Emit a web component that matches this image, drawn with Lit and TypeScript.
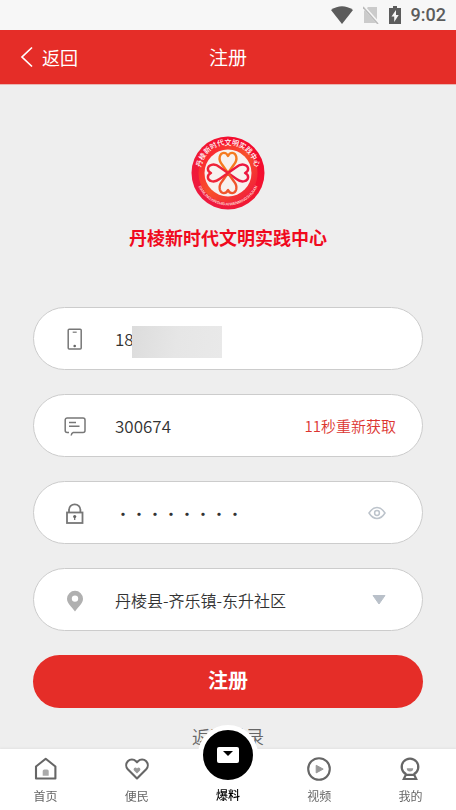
import { LitElement, html, svg, css } from "lit";
import { customElement, property, state } from "lit/decorators.js";
import { classMap } from "lit/directives/class-map.js";

const icons = {
  phone: svg`<rect x="5.200" y="2.300" width="13" height="19.600" rx="1" fill="none" stroke="#777" stroke-width="1.500"/>
    <path d="M9.700 5.200h4" stroke="#777" stroke-width="1.200"/><circle cx="11.700" cy="19" r="1.300" fill="#666"/>`,
  message: svg`<path d="M10 18.500H20a2 2 0 0 0 2-2V6a2 2 0 0 0-2-2H4.200a2 2 0 0 0-2 2V16.500a2 2 0 0 0 2 2H6M10.200 18.500q-1.700.5-2 3" fill="none" stroke="#777" stroke-width="1.500"/>
    <path d="M6 8.500h7M6 12.200h10.500" stroke="#777" stroke-width="1.500"/>`,
  lock: svg`<rect x="4" y="11.500" width="15.500" height="10.500" fill="none" stroke="#777" stroke-width="1.800"/>
    <path d="M6 11.500V9a5.700 5.700 0 0 1 11.400 0V11.500" fill="none" stroke="#777" stroke-width="1.800"/>
    <circle cx="11.700" cy="15.500" r="1.600" fill="#666"/><path d="M11.700 15v4" stroke="#666" stroke-width="1.200"/>`,
  pin: svg`<path fill-rule="evenodd" d="M12 2.800a8 8 0 0 0-8 8c0 4.500 4.500 8 8 12.700 3.500-4.700 8-8.200 8-12.700a8 8 0 0 0-8-8Zm0 4.600a3.200 3.200 0 1 1 0 6.400 3.200 3.200 0 0 1 0-6.400Z" fill="#b0b0b0"/>`,
  home: svg`<path d="M2 9.500 11.700 1.800l9.700 7.700v12H2Z" fill="none" stroke="#666" stroke-width="2.100" stroke-linejoin="round"/>
    <path d="M8.700 18.800v-4.800q0-1.600 1.600-1.600h2.800q1.600 0 1.600 1.600v4.800Z" fill="#aaa"/>`,
  heart: svg`<path d="M12 21.500 2.800 12.300a5.900 5.900 0 0 1 0-8 5.700 5.700 0 0 1 8.200 0l1 1 1-1a5.700 5.700 0 0 1 8.200 0 5.900 5.900 0 0 1 0 8Z" fill="none" stroke="#666" stroke-width="2.100" stroke-linejoin="round"/>
    <path d="m12 16.500-3-3q-1-1.400.2-2.500 1.600-1 2.800.6 1.200-1.600 2.800-.6 1.200 1.100.2 2.500Z" fill="#999"/>`,
  play: svg`<circle cx="12" cy="12" r="10.800" fill="none" stroke="#666" stroke-width="2.100"/>
    <path d="M9.200 8.300v7.600l7-3.800Z" fill="#999" stroke="#999" stroke-linejoin="round"/>`,
  user: svg`<path d="M8.300 17.300a8.300 8.300 0 1 1 7.400 0M7.800 17.800h8.400l2 4.200H5.800Z" fill="none" stroke="#666" stroke-width="2.200"/>
    <path d="M8.800 11.300h6.400a3.200 3.200 0 0 1-6.400 0Z" fill="#999"/>`,
};
type IconName = keyof typeof icons;

@customElement("line-icon")
class LineIcon extends LitElement {
  static styles = css`
    :host { display: block; width: 24px; height: 24px; flex: none; }
    svg { display: block; width: 100%; height: 100%; overflow: visible; }
  `;
  @property() name: IconName = "home";
  render() {
    return html`<svg viewBox="0 0 24 24" aria-hidden="true">${icons[this.name]}</svg>`;
  }
}

@customElement("status-bar")
class StatusBar extends LitElement {
  static styles = css`
    :host {
      display: flex; align-items: center; justify-content: flex-end; gap: 10px;
      height: 30px; padding: 0 10px; background: #f7f7f7; color: #5c5c5c;
      font: 500 18px/30px Roboto, sans-serif;
    }
    svg { display: block; }
  `;
  render() {
    return html`
      <svg width="22" height="18" viewBox="0 0 22 18"><path d="M0 4Q11-3.500 22 4L11 18Z" fill="#5c5c5c"/></svg>
      <svg width="16" height="18" viewBox="0 0 16 18"><path d="M5 1h9v16H1V5Z" fill="#cbcbcb"/><path d="M0 0 16 18" stroke="#f7f7f7" stroke-width="3"/><path d="M0 1 15 18" stroke="#bbb" stroke-width="1.500"/></svg>
      <svg width="12" height="20" viewBox="0 0 12 20"><path d="M0 3h4V1h4v2h4v16H0Z" fill="#5c5c5c"/><path d="M7 5 2.500 11.500h2.700V17l4.500-7H7Z" fill="#f7f7f7"/></svg>
      <time>9:02</time>
    `;
  }
}

@customElement("brand-logo")
class BrandLogo extends LitElement {
  static styles = css`
    :host { display: block; width: 74px; height: 74px; }
    svg { display: block; width: 100%; height: 100%; }
    .name { font: 500 7px "Noto Sans CJK SC", sans-serif; fill: #fff; }
    .latin { font: 700 4px "Liberation Sans", sans-serif; fill: #ffd0c8; }
  `;
  render() {
    const leaf = "M37 37L31 28.500C28.500 25.500 28.200 23 28.800 20.500C30 16 35 15.500 37 20C39 15.500 44 16 45.200 20.500C45.800 23 45.500 25.500 43 28.500Z";
    return html`<svg viewBox="0 0 74 74" role="img" aria-label="丹棱新时代文明实践中心">
      <defs>
        <linearGradient id="ring" x1="1" y1="0" x2="0" y2="1">
          <stop offset="0" stop-color="#f5052f"/><stop offset=".5" stop-color="#f21830"/><stop offset="1" stop-color="#ec1b46"/>
        </linearGradient>
        <linearGradient id="band" x1="0" y1="0" x2="1" y2="1">
          <stop offset="0" stop-color="#fb1b35"/><stop offset=".5" stop-color="#f8512a"/><stop offset="1" stop-color="#f01a3c"/>
        </linearGradient>
        <path id="top" d="M11 45A27.500 27.500 0 1 1 63 45"/>
        <path id="bottom" d="M4.500 37A32.500 32.500 0 0 0 69.500 37"/>
      </defs>
      <circle cx="37" cy="37" r="36.500" fill="url(#ring)"/>
      <circle cx="37" cy="37" r="26" fill="none" stroke="url(#band)" stroke-width="7"/>
      <circle cx="37" cy="37" r="23.500" fill="#f7f1ef"/>
      <g fill="none" stroke-width="2.400" stroke-linejoin="round">
        <path d=${leaf} stroke="#f57a20"/>
        <path d=${leaf} stroke="#ec1740" transform="rotate(90 37 37)"/>
        <path d=${leaf} stroke="#f0552c" transform="rotate(180 37 37)"/>
        <path d=${leaf} stroke="#ef2338" transform="rotate(270 37 37)"/>
      </g>
      <text class="name" text-anchor="middle"><textPath href="#top" startOffset="50%">丹棱新时代文明实践中心</textPath></text>
      <text class="latin" text-anchor="middle"><textPath href="#bottom" startOffset="50%">DANLINGXINSHIDAIWENMINGSHIJIAN</textPath></text>
    </svg>`;
  }
}

@customElement("tab-bar")
class TabBar extends LitElement {
  static styles = css`
    :host { display: block; background: #fff; box-shadow: 0 -1px 2px #e2e2e2; }
    nav { display: grid; grid-template-columns: repeat(5, 1fr); height: 61px; }
    .tab {
      display: flex; flex-direction: column; align-items: center; gap: 7px; padding-top: 8px;
      color: #666; text-decoration: none; font-size: 12px; line-height: 16px;
    }
    .main { position: relative; padding-top: 38px; color: #000; font-weight: 500; }
    .disc {
      position: absolute; bottom: 25px; left: 50%; margin-left: -30px; width: 50px; height: 50px;
      border: 5px solid #fff; border-radius: 50%; background: #000;
      display: grid; place-items: center;
    }
  `;
  @state() tabs: { label: string; icon?: IconName }[] = [
    { label: "首页", icon: "home" },
    { label: "便民", icon: "heart" },
    { label: "爆料" },
    { label: "视频", icon: "play" },
    { label: "我的", icon: "user" },
  ];
  render() {
    return html`<nav>${this.tabs.map(({ label, icon }) => html`
      <a href="#" class=${classMap({ tab: true, main: !icon })}>
        ${icon
          ? html`<line-icon name=${icon}></line-icon>`
          : html`<span class="disc"><svg width="22" height="16" viewBox="0 0 22 16"><rect width="22" height="16" rx="2" fill="#fff"/><path d="M6 4h10l-5 5Z"/></svg></span>`}
        <span>${label}</span>
      </a>`)}</nav>`;
  }
}

@customElement("app-root")
class AppRoot extends LitElement {
  static styles = css`
    :host {
      display: block; min-height: 100vh; background: #eee; color: #333;
      font-family: "Noto Sans CJK SC", sans-serif;
    }
    .header {
      display: grid; grid-template-columns: 1fr auto 1fr; align-items: center;
      height: 54px; padding: 0 20px; border-bottom: 1px solid #e9b5b2;
      background: #e52d28; color: #fff;
    }
    .back { display: flex; align-items: center; gap: 8px; color: #fff; text-decoration: none; font-size: 18px; line-height: 24px; }
    .header h1 { margin: 0; font-size: 19px; line-height: 24px; font-weight: 400; }
    .brand { display: flex; flex-direction: column; align-items: center; gap: 12px; padding-top: 51px; }
    .brand h2 { margin: 0; color: #f00a1e; font-size: 18px; line-height: 30px; font-weight: 700; }
    form { display: flex; flex-direction: column; gap: 24px; padding: 55px 33px 0; }
    .field {
      position: relative; display: flex; align-items: center; box-sizing: border-box; height: 63px;
      padding: 0 26px 0 29px; border: 1px solid #ccc; border-radius: 32px; background: #fff;
    }
    .field label { margin-right: 28px; }
    .field input, .field select {
      flex: 1; min-width: 0; height: 40px; padding: 0; border: 0; outline: 0; background: none;
      color: #333; font: 350 17px/24px "Noto Sans CJK SC", sans-serif; appearance: none;
    }
    .field select, .field .secret { font-size: 16px; }
    .mask {
      position: absolute; left: 98px; top: 18px; width: 90px; height: 32px;
      background: linear-gradient(100deg, #dcdcdc, #e6e6e6 50%, #e9e9e9);
    }
    button { border: 0; padding: 0; background: none; font-family: inherit; }
    .code { color: #dc3530; font-size: 15px; line-height: 24px; font-weight: 350; }
    .eye { margin-right: 10px; }
    .eye svg, .arrow { display: block; }
    .arrow { margin-right: 10px; pointer-events: none; }
    .submit { height: 53px; padding-bottom: 4px; border-radius: 27px; background: #e52d28; color: #fff; font-size: 20px; line-height: 28px; font-weight: 700; }
    .login { display: block; width: max-content; margin: 16px auto 0; padding-bottom: 62px; color: #666; font-size: 18px; line-height: 24px; font-weight: 350; text-decoration: none; }
    .tabs { position: fixed; left: 0; right: 0; bottom: 0; }
  `;
  @state() visible = false;
  render() {
    return html`
      <status-bar></status-bar>
      <header class="header">
        <a class="back" href="#"><svg width="14" height="22" viewBox="0 0 14 22"><path d="M12 1.500 2 11l10 9.500" fill="none" stroke="#fff" stroke-width="1.700"/></svg>返回</a>
        <h1>注册</h1>
      </header>
      <main>
        <section class="brand"><brand-logo></brand-logo><h2>丹棱新时代文明实践中心</h2></section>
        <form>
          <div class="field">
            <label for="phone" aria-label="手机号"><line-icon name="phone"></line-icon></label>
            <input id="phone" type="tel" value="18" autocomplete="off">
            <span class="mask"></span>
          </div>
          <div class="field">
            <label for="code" aria-label="验证码"><line-icon name="message"></line-icon></label>
            <input id="code" value="300674" autocomplete="off">
            <button class="code" type="button">11秒重新获取</button>
          </div>
          <div class="field">
            <label for="password" aria-label="密码"><line-icon name="lock"></line-icon></label>
            <input id="password" class="secret" type=${this.visible ? "text" : "password"} value="12345678" autocomplete="off">
            <button class="eye" type="button" aria-label="显示密码" @click=${() => (this.visible = !this.visible)}>
              <svg width="18" height="14" viewBox="0 0 18 14" fill="none" stroke="#bcc3cb" stroke-width="1.500"><path d="M1 7q3.500-5.500 8-5.500T17 7q-3.500 5.500-8 5.500T1 7Z"/><circle cx="9" cy="7" r="2.400"/></svg>
            </button>
          </div>
          <div class="field">
            <label for="area" aria-label="地区"><line-icon name="pin"></line-icon></label>
            <select id="area"><option>丹棱县-齐乐镇-东升社区</option></select>
            <svg class="arrow" width="14" height="10" viewBox="0 0 14 10"><path d="M1 .5h12L7 9Z" fill="#b9c0c9" stroke="#b9c0c9" stroke-linejoin="round"/></svg>
          </div>
          <button class="submit" type="button">注册</button>
        </form>
        <a class="login" href="#">返回登录</a>
      </main>
      <tab-bar class="tabs"></tab-bar>
    `;
  }
}
